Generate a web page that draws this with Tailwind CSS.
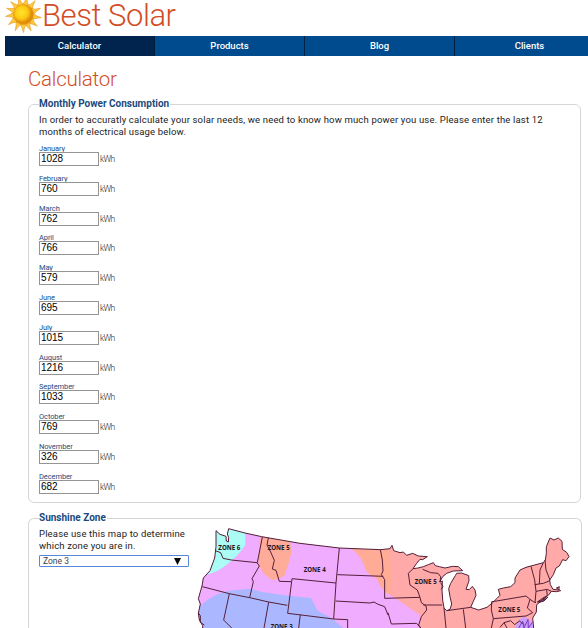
<!DOCTYPE html>
<html lang="en">
<head>
<meta charset="utf-8">
<title>Best Solar</title>
<script src="https://cdn.jsdelivr.net/npm/@tailwindcss/browser@4"></script>
</head>
<body class="w-[588px] h-[628px] overflow-hidden bg-white font-[Roboto,sans-serif] text-[#222]">
<header class="h-[36px] pl-[5px] flex items-start">
  <svg class="w-[37px] h-[36px] shrink-0" viewBox="0 0 37 36">
    <defs><radialGradient id="sun" cx=".4" cy=".4"><stop offset="0" stop-color="#ffe52b"/><stop offset=".65" stop-color="#fcc713"/><stop offset="1" stop-color="#e18d0b"/></radialGradient>
    <path id="ray" d="M15 5.500Q18 3 18.500-3.500Q20 2 22 5.500z"/></defs>
    <g fill="#ffc93a" stroke="#e39a25" stroke-width=".6">
      <use href="#ray" transform="rotate(10 18.500 14.500)"/><use href="#ray" transform="rotate(40 18.500 14.500)"/><use href="#ray" transform="rotate(70 18.500 14.500)"/><use href="#ray" transform="rotate(100 18.500 14.500)"/><use href="#ray" transform="rotate(130 18.500 14.500)"/><use href="#ray" transform="rotate(155 18.500 14.500)"/><use href="#ray" transform="rotate(180 18.500 14.500)"/><use href="#ray" transform="rotate(207 18.500 14.500)"/><use href="#ray" transform="rotate(236 18.500 14.500)"/><use href="#ray" transform="rotate(264 18.500 14.500)"/><use href="#ray" transform="rotate(290 18.500 14.500)"/><use href="#ray" transform="rotate(315 18.500 14.500)"/><use href="#ray" transform="rotate(342 18.500 14.500)"/>
    </g>
    <circle cx="18.500" cy="14.500" r="10" fill="url(#sun)" stroke="#e49a16" stroke-width=".7"/>
  </svg>
  <span class="text-[31px] leading-[33px] -mt-px font-light text-[#d24d26] tracking-[-0.45px] whitespace-nowrap">Best Solar</span>
</header>
<nav class="ml-[5px] flex h-[20px] bg-[#004b8d] text-white text-[9.500px] leading-[19px] font-medium text-center overflow-hidden">
  <a class="w-[150px] shrink-0 bg-[#00244d] border-r border-[#001a3a]">Calculator</a>
  <a class="w-[150px] shrink-0 border-r border-[#00203f]">Products</a>
  <a class="w-[150px] shrink-0 border-r border-[#00203f]">Blog</a>
  <a class="w-[149px] shrink-0">Clients</a>
</nav>
<main class="pl-[28px]">
  <h1 class="pt-[11px] h-[42px] text-[20.500px] leading-[24px] tracking-[-0.25px] font-light text-[#d24d26]">Calculator</h1>
  <fieldset class="w-[553px] h-[405px] border border-[#d6d6d8] rounded-[6px] pl-[10px]">
    <legend class="h-[12px] text-[10px] leading-[12px] font-bold text-[#1b4a7d] pr-px">Monthly Power Consumption</legend>
    <p class="pt-[4px] h-[35px] text-[9.500px] leading-[12px] tracking-[0.16px] whitespace-nowrap">In order to accuratly calculate your solar needs, we need to know how much power you use. Please enter the last 12<br>months of electrical usage below.</p>
    <div id="months" class="flex flex-col"></div>
  </fieldset>
  <fieldset class="mt-[9px] w-[553px] h-[116px] border border-b-0 border-[#d6d6d8] rounded-t-[6px] pl-[10px]">
    <legend class="h-[12px] text-[10px] leading-[12px] font-bold text-[#1b4a7d] pr-px">Sunshine Zone</legend>
    <div class="flex">
      <div class="w-[151px] shrink-0 pt-[4px]">
        <p class="text-[9.500px] leading-[12px] tracking-[0.16px] whitespace-nowrap">Please use this map to determine<br>which zone you are in.</p>
        <div class="mt-[3px] w-[150px] h-[12px] border border-[#5787db] rounded-[1px] flex items-center justify-between pl-[3px] pr-[7px] text-[8.500px] leading-[10px] text-[#444]"><span>Zone 3</span><svg class="w-[7px] h-[7px]" viewBox="0 0 7 7"><path d="M0 0h7L3.500 7z"/></svg></div>
      </div>
      <svg class="w-[391px] h-[104px] shrink-0" viewBox="0 42 1173 312" preserveAspectRatio="xMinYMin slice">
        <defs><clipPath id="us"><path id="land" d="M78 62L90 73 108 79 109 93 115 96 116 83 112 72 116 56 165 69 215 80 330 100 448 114 572 119 600 116 606 106 611 122 630 128 640 126 650 136 668 130 685 138 712 140 698 149 690 148 680 160 669 176 684 174 700 170 715 164 730 158 736 167 748 170 765 174 788 169 805 170 818 182 790 183 770 190 758 200 749 216 757 213 756 240 758 270 762 294 770 302 780 298 785 282 780 260 776 236 782 220 796 197 800 190 815 189 836 197 837 212 828 238 838 239 847 229 855 240 858 256 850 274 842 292 866 300 891 292 908 278 922 264 930 256 925 238 940 234 962 230 975 218 975 204 990 180 1008 172 1060 158 1066 150 1069 130 1069 110 1080 84 1092 90 1105 84 1116 94 1117 118 1130 127 1137 140 1128 152 1118 149 1108 168 1098 174 1090 194 1079 210 1081 224 1089 238 1106 240 1108 230 1099 234 1112 242 1100 245 1084 244 1075 256 1062 262 1042 276 1049 274 1071 258 1065 265 1040 284 1039 306 1028 324 1031 354 1030 380H38L38 347 28 330 25 310 31 282 25 266 36 228 40 204 60 182 74 144 78 110z"/></clipPath></defs>
        <g clip-path="url(#us)">
          <path fill="#ffaaa8" d="M0 0H1194V400H0z"/>
          <path fill="#f0acff" d="M0 0H448L480 114Q510 135 522 165T560 205Q575 245 606 258L645 284 692 317 686 345 705 400H0z"/>
          <path fill="#ffab96" d="M490 114Q515 134 522 165T560 205Q575 245 606 258L600 114z"/>
          <path fill="#aafcf5" d="M0 0H166V105Q145 137 112 163T55 192L0 200z"/>
          <path fill="#ffab99" d="M213 75L300 92 305 125 296 160 284 196 268 206 246 210 220 190 206 165 205 140z"/>
          <path fill="#abb8ff" d="M20 300Q65 248 130 241L180 236 215 246 300 258 363 264 383 302 420 321 460 354V400H20z"/>
          <path fill="#c99fff" d="M975 354L988 328 1004 320 1022 334 1034 354z"/>
        </g>
        <g fill="none" stroke="#542039" stroke-width="3" stroke-linejoin="round">
          <use href="#land"/>
          <path d="M76 122L92 128 99 145 124 150 201 158 208 168 186 206 190 215 179 263M217 81L202 158M235 84L231 105 242 126 253 151 247 177 258 181 268 214 303 215M37 230L118 251 179 263 236 276 292 286M118 251L101 330 125 354M236 276L222 354M306 206L438 219 431 327 293 310 306 206M448 114L438 219M442 194L580 199M437 273L540 279 552 276 562 282 584 290 594 315M571 119L577 150 579 183 574 194 584 209 584 265 690 262M431 327L473 329V354M331 314L326 354M669 176L655 190 660 225 682 240 690 262 694 278 708 288 710 300 694 320 686 345 692 354M594 308L604 342 680 340 692 354M700 285L756 285M698 178L722 188 744 190 752 200 750 216M762 294L768 354M770 302L842 292M820 298L827 354M914 274L905 275 904 300 910 326 1008 318 1028 308M914 274L1008 258 1020 268 1030 275M1020 268L1012 294 1028 308M1030 275L1038 278M1023 169L1034 210 1038 244 1035 278M1060 158L1050 180 1048 222M1065 150L1068 180 1080 210M1034 224L1060 220 1080 212M1038 244L1072 238 1084 244M1070 240L1072 257M910 326L904 354M930 352L942 338 962 332 974 344 988 333 1003 344M942 338L951 354"/>
          <path stroke="#7c38c8" d="M986 354L998 334 1002 354 1014 328 1015 354 1029 335"/>
          <path d="M752 218l7 12-6 8M1044 276l14-3 16-12-12 12-15 4M25 309l6 8 0 20 12 8"/>
        </g>
        <g class="font-[Open_Sans,sans-serif] font-bold" font-size="20.500" fill="#241521">
          <text x="85" y="119" textLength="66" lengthAdjust="spacingAndGlyphs">ZONE 6</text><text x="233" y="119" textLength="66" lengthAdjust="spacingAndGlyphs">ZONE 5</text><text x="341" y="187" textLength="66" lengthAdjust="spacingAndGlyphs">ZONE 4</text><text x="242" y="358" textLength="66" lengthAdjust="spacingAndGlyphs">ZONE 3</text><text x="674" y="222" textLength="66" lengthAdjust="spacingAndGlyphs">ZONE 5</text><text x="925" y="305" textLength="66" lengthAdjust="spacingAndGlyphs">ZONE 5</text>
        </g>
      </svg>
    </div>
  </fieldset>
</main>
<script>
const data = [["January",1028],["February",760],["March",762],["April",766],["May",579],["June",695],["July",1015],["August",1216],["September",1033],["October",769],["November",326],["December",682]];
document.getElementById("months").innerHTML = data.map(([m, v]) => `<div class="h-[29.800px] shrink-0"><label class="block h-[7px] text-[7.500px] leading-[8px] tracking-[-0.1px] text-[#1b4a7d]">${m}</label><div class="flex"><span class="w-[60px] h-[14px] border border-[#949494] pl-[1px] text-[10px] leading-[12px] tracking-[-0.1px] font-[Liberation_Sans,Arial,sans-serif] text-black">${v}</span><span class="pl-px text-[8.500px] leading-[14px] font-light tracking-[-0.6px]">kWh</span></div></div>`).join("");
</script>
</body>
</html>
